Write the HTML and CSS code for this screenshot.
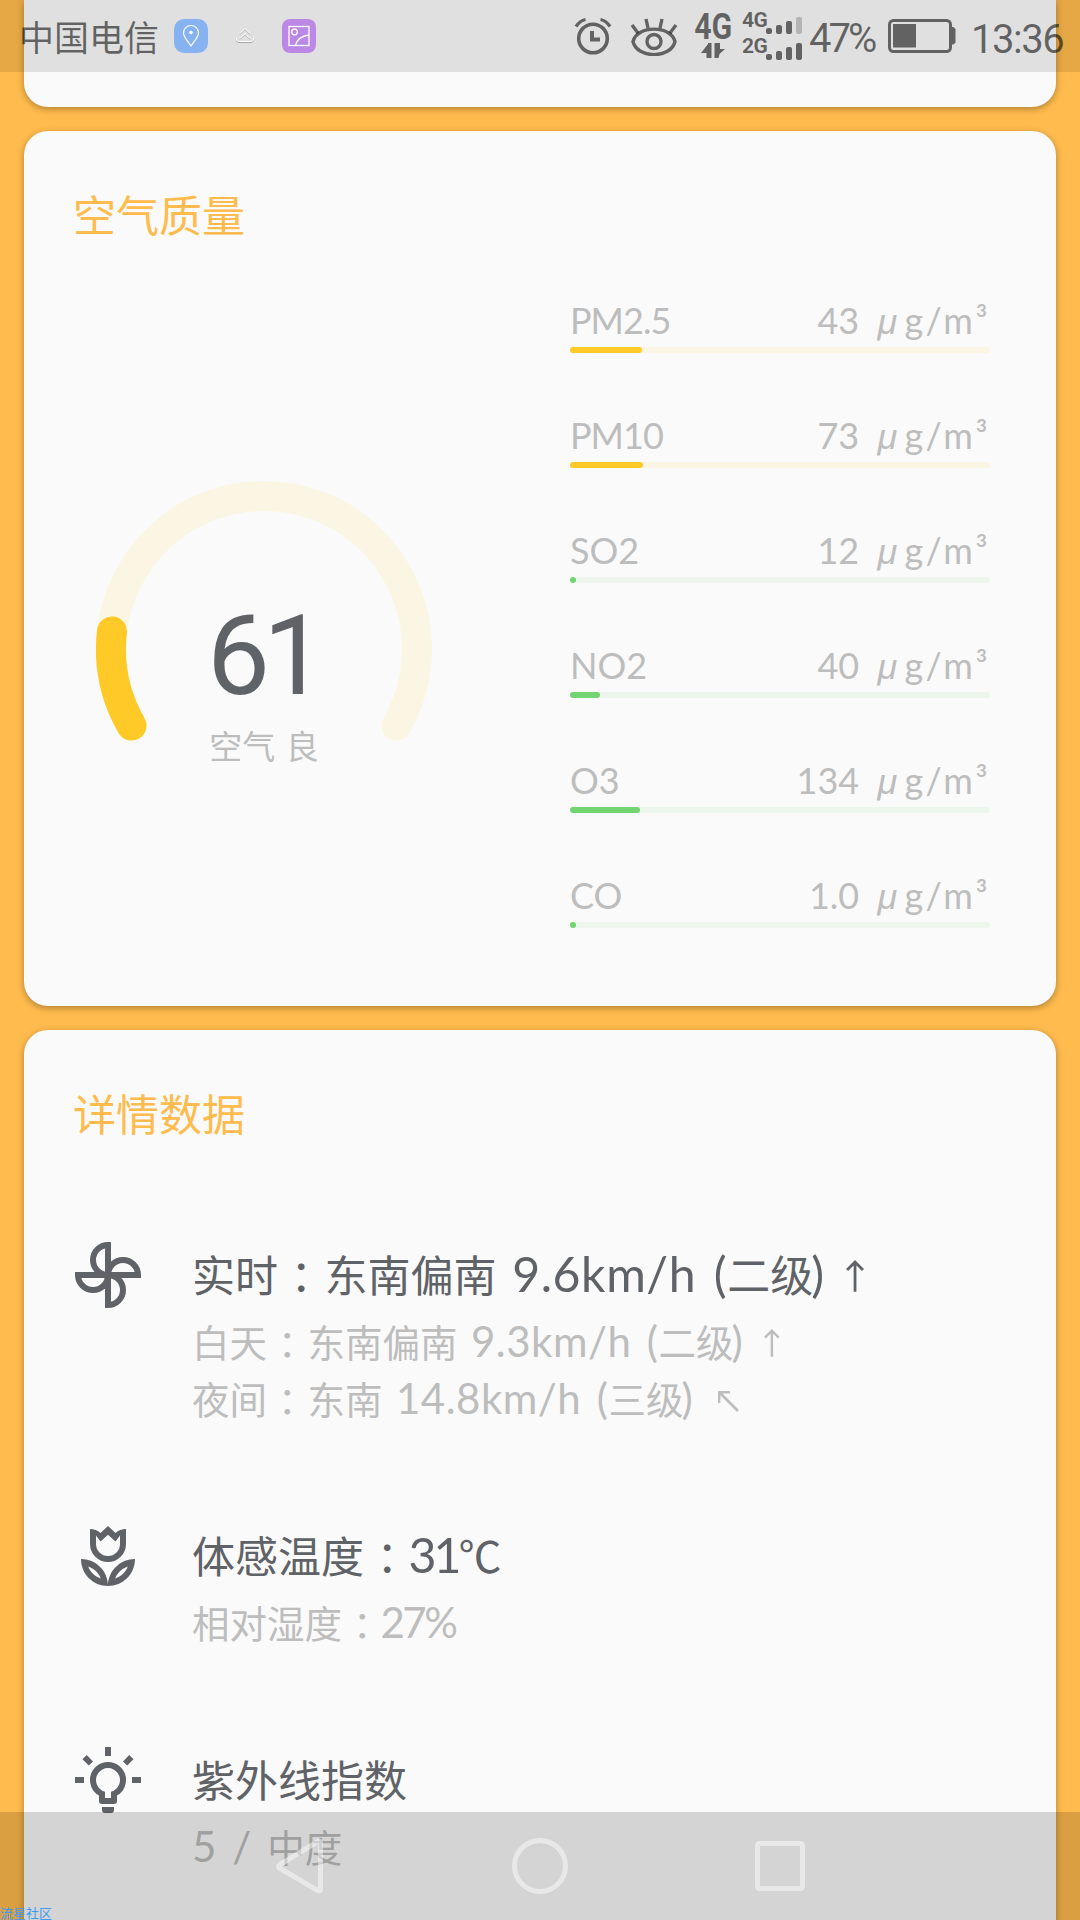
FILE: index.html
```
<!DOCTYPE html>
<html lang="zh-CN">
<head>
    <meta charset="UTF-8">
    <meta name="viewport" content="width=device-width, initial-scale=1.0">
    <title>空气质量</title>
    <link rel="stylesheet" href="styles.css">
</head>
<body>

<div class="screen">

    <!-- Status bar -->
    <header class="status-bar">
        <span class="carrier">中国电信</span>
        <svg class="app-icon" width="34" height="34" viewBox="0 0 34 34">
            <rect width="34" height="34" rx="10" fill="#86b2f2"/>
            <path d="M17 27C13 21 9.500 18 9.500 14a7.500 7.500 0 0 1 15 0c0 4-3.500 7-7.500 13z" fill="none" stroke="#fff" stroke-width="1.200"/>
            <circle cx="17" cy="13.500" r="1.800" fill="#fff"/>
        </svg>
        <svg class="upload-icon" width="20" height="18" viewBox="0 0 20 18" fill="none" stroke="#a8a8ac" stroke-width="1">
            <path d="M5 7.500l5-5 5 5M5 12.500l5-5 5 5M1 11.500q0 4 3 4h12q3 0 3-4"/>
            <path d="M5 6.500l5-5 5 5M5 11.500l5-5 5 5M1 10.500q0 4 3 4h12q3 0 3-4" stroke="#fff"/>
        </svg>
        <svg class="app-icon" width="34" height="34" viewBox="0 0 34 34">
            <rect width="34" height="34" rx="8" fill="#bb88e6"/>
            <g fill="none" stroke="#fff" stroke-width="1.300">
                <rect x="7" y="7.500" width="20" height="19"/>
                <circle cx="12.500" cy="13" r="2.800"/>
                <path d="M13.500 26.500q2-9 13.500-10.500"/>
            </g>
        </svg>

        <div class="status-right">
            <svg class="alarm" width="38" height="40" viewBox="0 0 38 40" fill="none" stroke="currentColor">
                <circle cx="19" cy="22.500" r="14.300" stroke-width="3.600"/>
                <path d="M18 15v8.500h8" stroke-width="4"/>
                <path d="M2 10.500q4-6 9.500-7M36 10.500q-4-6-9.500-7" stroke-width="3.200"/>
            </svg>
            <svg class="eye" width="48" height="40" viewBox="0 0 48 40" fill="none" stroke="currentColor" stroke-width="3.400">
                <path d="M3 25.500c4-16.500 38-16.500 42 0c-4 17.500-38 17.500-42 0z"/>
                <circle cx="24" cy="25.500" r="7"/>
                <path d="M2 9l6 8M16 3l2 9M32 3l-2 9M46 9l-6 8"/>
            </svg>
            <div class="network">
                <span>4G</span>
                <svg width="24" height="15" viewBox="0 0 24 15" fill="currentColor">
                    <path d="M10.500 0v15H5.500V10H0L7 1V0zM13.500 0v15h4l1-4L24 6h-5V0z"/>
                </svg>
            </div>
            <div class="sims">
                <div class="sim">
                    <span>4G</span>
                    <i class="s1"></i><i class="s2"></i><i class="s3"></i><i class="s4 off"></i>
                </div>
                <div class="sim">
                    <span>2G</span>
                    <i class="s1"></i><i class="s2"></i><i class="s3"></i><i class="s4"></i>
                </div>
            </div>
            <span class="percent">47%</span>
            <svg class="battery" width="68" height="34" viewBox="0 0 68 34">
                <rect x="1.500" y="1.500" width="61" height="31" rx="4" fill="none" stroke="currentColor" stroke-width="3"/>
                <rect x="5" y="5" width="23" height="23.500" fill="currentColor"/>
                <path d="M64 8h1.500l2 2v13.500l-2 2H64z" fill="currentColor"/>
            </svg>
            <span class="clock">13:36</span>
        </div>
    </header>

    <main class="cards">
        <section class="card card-prev"></section>

        <!-- Air quality -->
        <section class="card card-air">
            <h2>空气质量</h2>
            <div class="air">
                <div class="gauge">
                    <svg width="336" height="336" viewBox="-168 -168 336 336" fill="none" stroke-width="30" stroke-linecap="round">
                        <path d="M-132.500 76.500A153 153 0 1 1 132.500 76.500" stroke="#fbf5e4"/>
                        <path d="M-132.500 76.500A153 153 0 0 1 -152 -17.600" stroke="#ffc928"/>
                    </svg>
                    <div class="gauge-value">61</div>
                    <div class="gauge-label">空气 良</div>
                </div>
                <ul class="pollutants">
                    <li class="yellow">
                        <div class="line"><span class="name">PM2.5</span><span>43 <em>μ</em><span class="unit">g/m³</span></span></div>
                        <div class="bar"><b style="width: 72px"></b></div>
                    </li>
                    <li class="yellow">
                        <div class="line"><span class="name">PM10</span><span>73 <em>μ</em><span class="unit">g/m³</span></span></div>
                        <div class="bar"><b style="width: 73px"></b></div>
                    </li>
                    <li class="green">
                        <div class="line"><span class="name">SO2</span><span>12 <em>μ</em><span class="unit">g/m³</span></span></div>
                        <div class="bar"><b style="width: 6px"></b></div>
                    </li>
                    <li class="green">
                        <div class="line"><span class="name">NO2</span><span>40 <em>μ</em><span class="unit">g/m³</span></span></div>
                        <div class="bar"><b style="width: 30px"></b></div>
                    </li>
                    <li class="green">
                        <div class="line"><span class="name">O3</span><span>134 <em>μ</em><span class="unit">g/m³</span></span></div>
                        <div class="bar"><b style="width: 70px"></b></div>
                    </li>
                    <li class="green">
                        <div class="line"><span class="name">CO</span><span>1.0 <em>μ</em><span class="unit">g/m³</span></span></div>
                        <div class="bar"><b style="width: 6px"></b></div>
                    </li>
                </ul>
            </div>
        </section>

        <!-- Details -->
        <section class="card card-details">
            <h2>详情数据</h2>
            <div class="details">
                <div class="detail">
                    <svg class="icon" viewBox="0 0 24 24" fill="none" stroke="currentColor" stroke-width="2">
                        <path d="M12 12V2a5 5 0 0 0 0 10zM12 12h10a5 5 0 0 0-10 0zM12 12v10a5 5 0 0 0 0-10zM12 12H2a5 5 0 0 0 10 0z"/>
                    </svg>
                    <div>
                        <p class="main">实时<span class="colon" lang="zh-TW">：</span>东南偏南<span class="num"> 9.6km/h (</span>二级<span class="num">)</span><svg class="arrow" viewBox="0 0 18 32"><path d="M9 32V2M1 10l8-8 8 8"/></svg></p>
                        <p class="sub">白天<span class="colon" lang="zh-TW">：</span>东南偏南<span class="num"> 9.3km/h (</span>二级<span class="num">)</span><svg class="arrow" viewBox="0 0 18 32"><path d="M9 32V2M1 10l8-8 8 8"/></svg></p>
                        <p class="sub">夜间<span class="colon" lang="zh-TW">：</span>东南<span class="num"> 14.8km/h (</span>三级<span class="num">)</span><svg class="arrow-nw" viewBox="0 0 21 21"><path d="M1 12V1h11M1 1l19 19"/></svg></p>
                    </div>
                </div>
                <div class="detail">
                    <svg class="icon" viewBox="0 0 24 24" fill="currentColor" fill-rule="evenodd">
                        <path d="M6 3c1.300 0 2.600.5 3.500 1.300L12 2l2.500 2.300C15.400 3.500 16.700 3 18 3v5A6 6 0 0 1 6 8zM8 5.200V8a4 4 0 0 0 8 0V5.200l-1.500 2L12 4.900 9.500 7.200z"/>
                        <path d="M3 13c0 5 4 9 9 9c0-5-4-9-9-9zM5.400 15.500c2 .7 3.600 2.200 4.200 4c-2-.7-3.600-2.200-4.200-4z"/>
                        <path d="M21 13c0 5-4 9-9 9c0-5 4-9 9-9zM18.600 15.500c-2 .7-3.600 2.200-4.200 4c2-.7 3.600-2.200 4.200-4z"/>
                    </svg>
                    <div>
                        <p class="main">体感温度<span class="colon" lang="zh-TW">：</span><span class="num tight">31</span>℃</p>
                        <p class="sub">相对湿度<span class="colon" lang="zh-TW">：</span><span class="num tight">27%</span></p>
                    </div>
                </div>
                <div class="detail">
                    <svg class="icon" viewBox="0 0 24 24" fill="currentColor">
                        <path fill-rule="evenodd" d="M12 6a6 6 0 0 0-3 11.200V19a1 1 0 0 0 1 1h4a1 1 0 0 0 1-1v-1.800A6 6 0 0 0 12 6zM13 15.900V18h-2v-2.100a4 4 0 1 1 2 0z"/>
                        <path d="M11 1h2v3h-2zM1 11h3v2H1zM20 11h3v2h-3zM10 21h4v1a1 1 0 0 1-1 1h-2a1 1 0 0 1-1-1z"/>
                        <path d="M4.200 4.400l2.100 2.100M19.800 4.400l-2.100 2.100" stroke="currentColor" stroke-width="2"/>
                    </svg>
                    <div>
                        <p class="main">紫外线指数</p>
                        <p class="sub"><span class="num">5 / </span>中度</p>
                    </div>
                </div>
            </div>
        </section>
    </main>

    <!-- Navigation bar -->
    <nav class="nav-bar">
        <svg width="50" height="56" viewBox="0 0 50 56"><path d="M45.500 5v46q0 3-3 1.400L5 30.500q-3-2 0-4L42.500 3.600q3-1.600 3 1.400z"/></svg>
        <svg width="56" height="56" viewBox="0 0 56 56"><circle cx="28" cy="28" r="25.500"/></svg>
        <svg width="50" height="50" viewBox="0 0 50 50"><rect x="2.500" y="2.500" width="45" height="45" rx="2"/></svg>
    </nav>

    <div class="watermark">流星社区</div>
</div>

</body>
</html>
```
FILE: styles.css
```
:root {
    --bg-color: #ffbb4d;
    --card-color: #fafafa;
    --text-color: #5f6267;
    --muted-color: #bdbdbd;
}

* {
    box-sizing: border-box;
}

body {
    margin: 0;
    background-color: var(--bg-color);
    color: var(--text-color);
    font-family: Lato, "Noto Sans CJK SC", sans-serif;
}

h2,
p,
ul {
    margin: 0;
    padding: 0;
}

.screen {
    position: relative;
    width: 1080px;
    height: 1920px;
    overflow: hidden;
}

/* Status bar */
.status-bar {
    position: absolute;
    top: 0;
    left: 0;
    z-index: 2;
    display: flex;
    align-items: center;
    width: 1080px;
    height: 72px;
    padding: 0 18px 0 19px;
    background-color: rgba(0, 0, 0, 0.1);
    color: rgba(0, 0, 0, 0.56);
}

.carrier {
    width: 155px;
    padding-top: 2px;
    font-size: 35px;
    line-height: 70px;
    white-space: nowrap;
}

.upload-icon {
    margin: 0 27px 0 27px;
}

.status-right {
    display: flex;
    align-items: center;
    margin-left: auto;
}

.alarm {
    margin-right: 18px;
}

.eye {
    margin-right: 16px;
}

.network {
    display: flex;
    flex-direction: column;
    align-items: center;
    gap: 3px;
    width: 38px;
    margin-right: 10px;
    font: bold 37px/26px Roboto, sans-serif;
}

.network span {
    transform: scaleX(0.82);
}

.sims {
    display: flex;
    flex-direction: column;
    gap: 5px;
    width: 62px;
    margin-right: 5px;
}

.sim {
    display: flex;
    align-items: flex-end;
    gap: 4px;
    height: 21px;
}

.sim span {
    width: 20px;
    height: 21px;
    font: bold 21px/14px Roboto, sans-serif;
    letter-spacing: -0.5px;
}

.sim i {
    width: 6px;
    border-radius: 2px;
    background-color: currentColor;
}

.s1 {
    height: 6px;
}

.s2 {
    height: 9px;
}

.s3 {
    height: 13px;
}

.s4 {
    height: 17px;
}

.sim .off {
    opacity: 0.35;
}

.percent {
    width: 79px;
    padding-top: 4px;
    font-family: Roboto, sans-serif;
    font-size: 40px;
    letter-spacing: -3px;
}

.battery {
    margin-right: 15px;
}

.clock {
    width: 91px;
    padding-top: 6px;
    font-family: Roboto, sans-serif;
    font-size: 40px;
    letter-spacing: -1.500px;
    white-space: nowrap;
}

/* Cards */
.cards {
    display: flex;
    flex-direction: column;
    gap: 24px;
    padding: 0 24px;
}

.card {
    padding: 48px;
    border-radius: 24px;
    background-color: var(--card-color);
    box-shadow: 0 2px 7px rgba(0, 0, 0, 0.32);
}

.card h2 {
    height: 75px;
    padding-left: 1px;
    color: var(--bg-color);
    font-size: 43px;
    font-weight: normal;
    line-height: 73px;
}

.card-prev {
    height: 107px;
    border-radius: 0 0 24px 24px;
}

.card-air {
    height: 875px;
}

.card-details {
    height: 960px;
}

/* Air quality */
.air {
    display: flex;
    justify-content: space-between;
    padding: 44px 18px 0 24px;
}

.gauge {
    position: relative;
    width: 336px;
    height: 336px;
    margin-top: 183px;
    text-align: center;
}

.gauge svg {
    display: block;
}

.gauge-value {
    position: absolute;
    top: 115px;
    left: 0;
    width: 334px;
    font-family: Roboto, sans-serif;
    font-size: 112px;
    line-height: 120px;
    letter-spacing: -7px;
}

.gauge-label {
    position: absolute;
    top: 241px;
    left: 0;
    width: 336px;
    color: var(--muted-color);
    font-size: 33px;
    line-height: 48px;
    word-spacing: 2px;
}

.pollutants {
    width: 420px;
    list-style: none;
}

.pollutants li {
    height: 115px;
}

.line {
    display: flex;
    justify-content: space-between;
    height: 49px;
    color: var(--muted-color);
    font-size: 36px;
    line-height: 44px;
}

.yellow .name {
    letter-spacing: -1px;
}

.line em {
    display: inline-block;
    width: 36px;
    padding-left: 2px;
    text-align: center;
    font-family: "Liberation Sans", sans-serif;
}

.unit {
    letter-spacing: 2.500px;
}

.bar {
    height: 6px;
    border-radius: 3px;
}

.bar b {
    display: block;
    height: 6px;
    border-radius: 3px;
}

.yellow .bar {
    background-color: #fbf5e4;
}

.yellow b {
    background-color: #ffc928;
}

.green .bar {
    background-color: #ecf6ec;
}

.green b {
    background-color: #72d572;
}

/* Details */
.details {
    display: flex;
    flex-direction: column;
    gap: 97px;
    padding-top: 90px;
}

.detail {
    display: flex;
    gap: 48px;
}

.icon {
    width: 72px;
    height: 72px;
    margin-top: -4px;
}

.main {
    height: 70px;
    font-size: 43px;
    line-height: 66px;
    white-space: nowrap;
}

.sub {
    height: 57px;
    color: var(--muted-color);
    font-size: 37.500px;
    line-height: 60px;
    white-space: nowrap;
}

.num {
    margin-left: -2px;
    font-size: 1.120em;
    line-height: 1;
    letter-spacing: 0.012em;
    word-spacing: 0.1em;
    white-space: pre;
}

.num:first-child {
    margin-left: 0;
}

.tight {
    letter-spacing: -0.060em;
}

.colon {
    display: inline-block;
    width: 1.080em;
    font-family: "Noto Sans CJK TC", sans-serif;
    line-height: 1;
    text-align: center;
    vertical-align: -2px;
}

.arrow,
.arrow-nw {
    fill: none;
    stroke: currentColor;
    stroke-width: 2.800;
}

.arrow {
    width: 0.420em;
    height: 0.740em;
    margin-left: 21px;
}

.arrow-nw {
    width: 21px;
    height: 21px;
    margin-left: 25px;
    vertical-align: 2px;
}

/* Navigation bar */
.nav-bar {
    position: absolute;
    bottom: 0;
    left: 0;
    z-index: 2;
    display: flex;
    align-items: center;
    justify-content: center;
    gap: 187px;
    width: 1080px;
    height: 108px;
    background-color: rgba(0, 0, 0, 0.15);
}

.nav-bar svg {
    fill: none;
    stroke: rgba(255, 255, 255, 0.48);
    stroke-width: 5;
}

.watermark {
    position: absolute;
    bottom: 0;
    left: 0;
    z-index: 3;
    color: #3d9bf5;
    font-size: 13px;
    line-height: 13px;
}
```
